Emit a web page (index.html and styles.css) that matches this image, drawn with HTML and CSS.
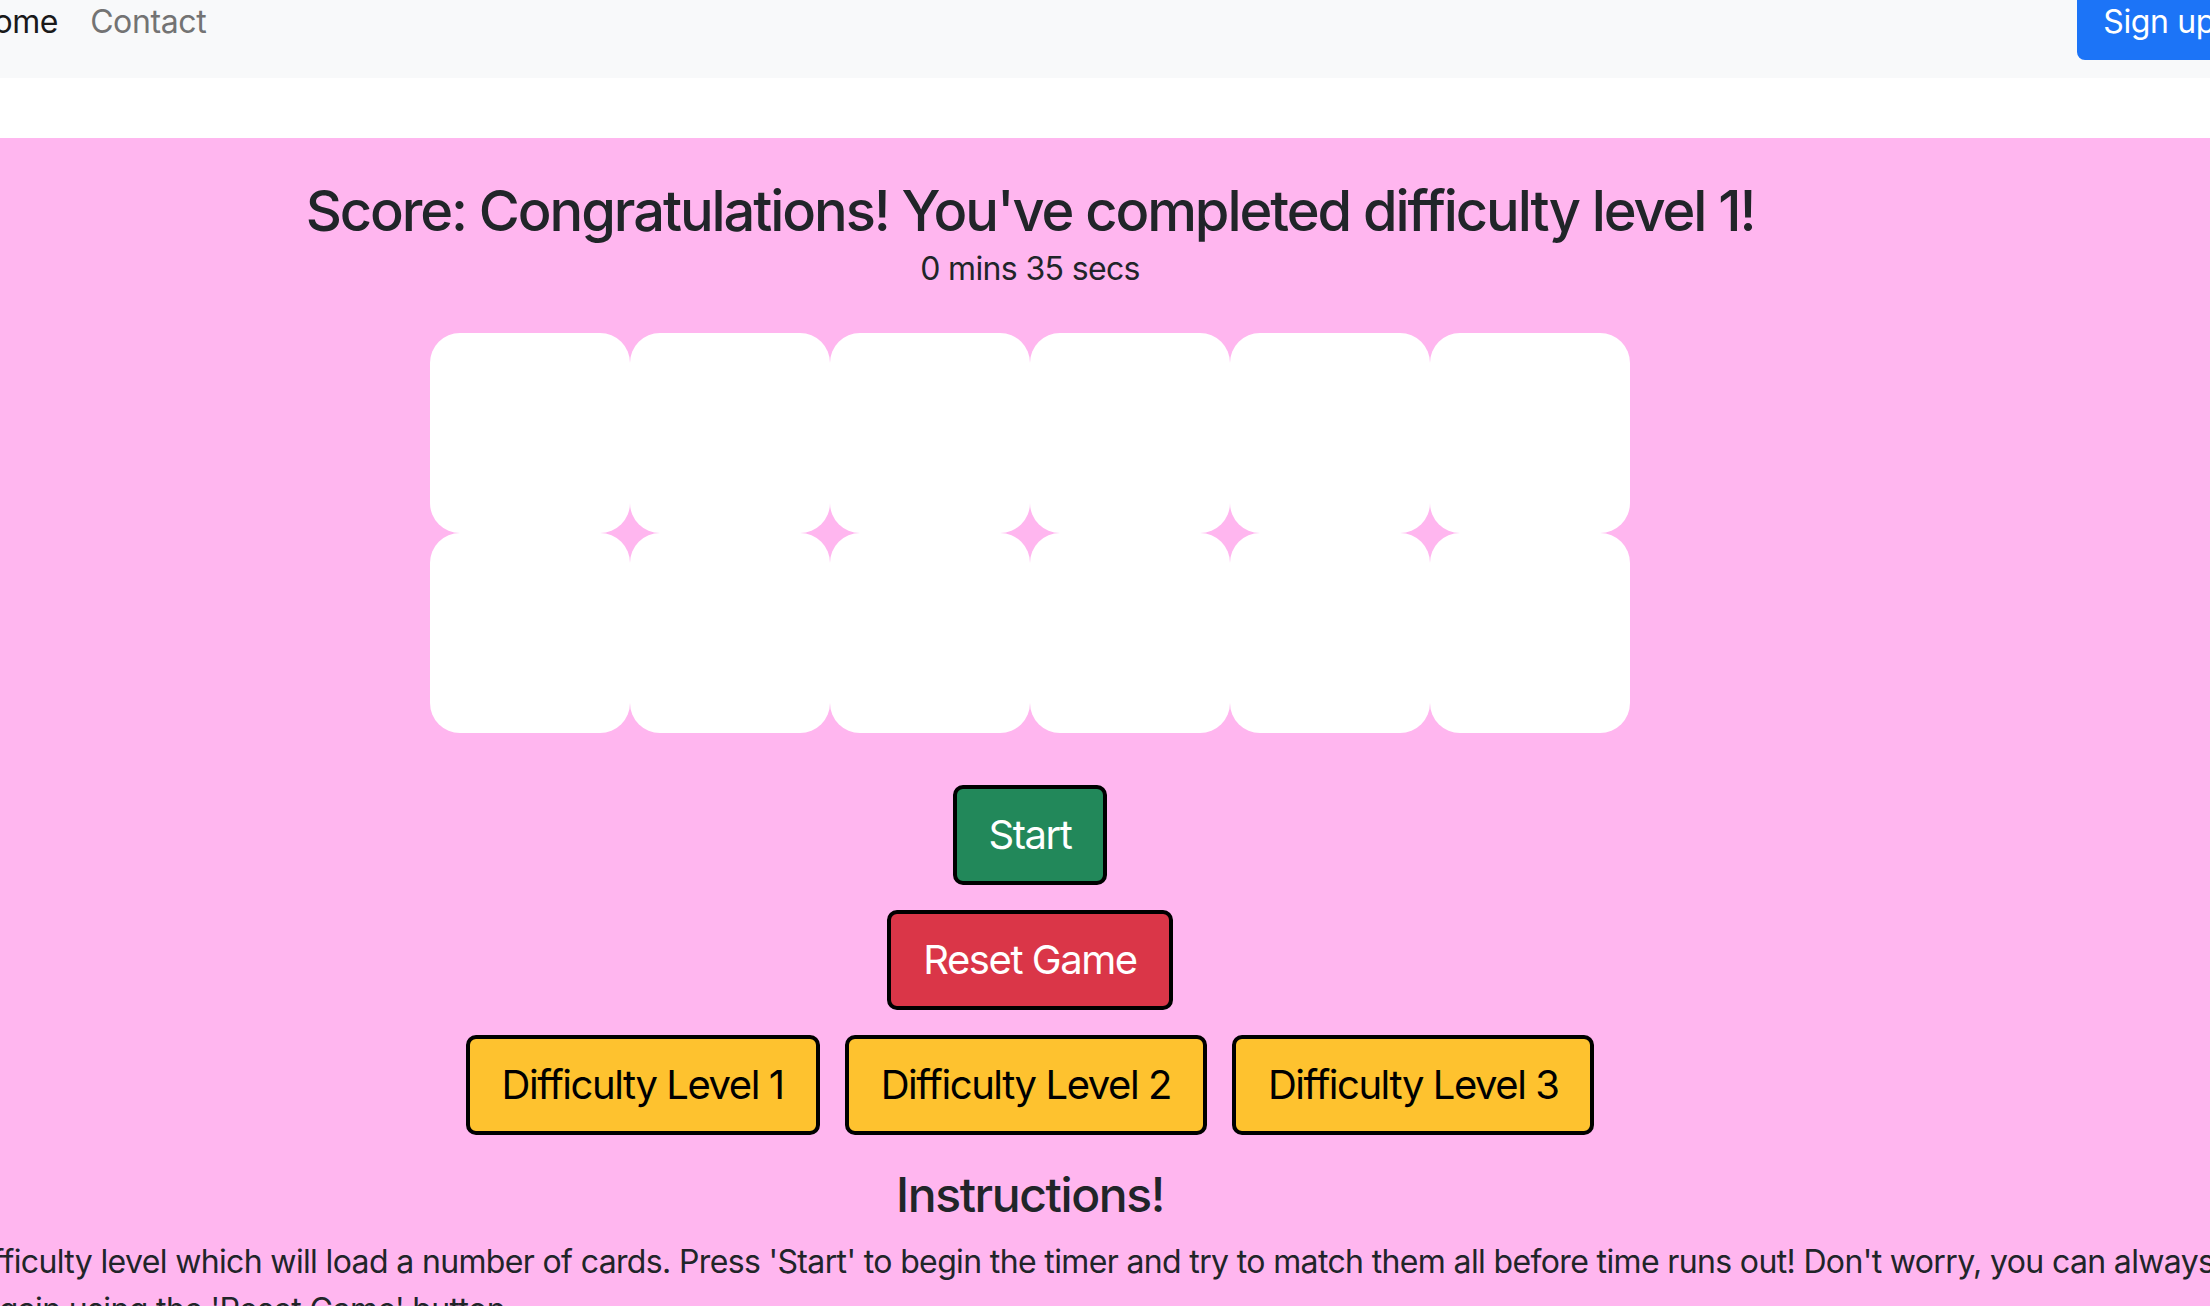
FILE: index.html
```html
<!DOCTYPE html>
<html lang="en">
<head>
<meta charset="utf-8">
<title>Memory Game</title>
<link rel="stylesheet" href="styles.css">
</head>
<body>
<nav class="navbar">
  <div class="nav-links">
    <a class="nav-link active" href="#">Home</a>
    <a class="nav-link" href="#">Contact</a>
  </div>
  <a class="btn-signup" href="#">Sign up</a>
</nav>
<main class="game">
  <div class="game-inner">
    <h3 class="score">Score: Congratulations! You've completed difficulty level 1!</h3>
    <p class="timer">0 mins 35 secs</p>
    <div class="board">
      <div class="card"></div><div class="card"></div><div class="card"></div>
      <div class="card"></div><div class="card"></div><div class="card"></div>
      <div class="card"></div><div class="card"></div><div class="card"></div>
      <div class="card"></div><div class="card"></div><div class="card"></div>
    </div>
    <div class="controls">
      <button class="btn btn-start">Start</button>
      <button class="btn btn-reset">Reset Game</button>
      <div class="levels">
        <button class="btn btn-level">Difficulty Level 1</button>
        <button class="btn btn-level">Difficulty Level 2</button>
        <button class="btn btn-level">Difficulty Level 3</button>
      </div>
    </div>
    <h4 class="instr-title">Instructions!</h4>
    <p class="instr-text">Choose a difficulty level which will load a number of cards. Press 'Start' to begin the timer and try to match them all before time runs out! Don't worry, you can always<br>try again using the 'Reset Game' button.</p>
  </div>
</main>
</body>
</html>
```
FILE: styles.css
```css
html, body {
  margin: 0;
  height: 100%;
  overflow: hidden;
}
body {
  font-family: Inter, "Noto Sans", "Liberation Sans", sans-serif;
  color: #212529;
  background: #fff;
}
.navbar {
  display: flex;
  justify-content: space-between;
  align-items: flex-start;
  height: 78px;
  background: #f8f9fa;
  margin-bottom: 60px;
}
.nav-links {
  display: flex;
  margin-left: -46px;
  margin-top: -2px;
}
.nav-link {
  font-size: 32px;
  line-height: 48px;
  letter-spacing: -0.012em;
  padding: 0 16px;
  text-decoration: none;
  color: #737373;
}
.nav-link.active {
  color: #1a1a1a;
}
.btn-signup {
  align-self: flex-end;
  margin-bottom: 18px;
  margin-right: -31px;
  font-size: 32px;
  line-height: 48px;
  letter-spacing: -0.012em;
  padding: 12px 24px;
  border: 2px solid #1c74f7;
  border-radius: 8px;
  background: #1c74f7;
  color: #fff;
  text-decoration: none;
}
.game {
  background: #ffb6ef;
  padding-top: 40px;
  min-height: 1300px;
}
.game-inner {
  width: 2060px;
  display: flex;
  flex-direction: column;
  align-items: center;
}
.score {
  margin: 0;
  font-size: 56px;
  font-weight: 500;
  line-height: 1.2;
  letter-spacing: -0.037em;
}
.timer {
  margin: 0 0 40px;
  font-size: 32px;
  line-height: 1.5;
  letter-spacing: -0.02em;
}
.board {
  display: grid;
  grid-template-columns: repeat(6, 200px);
  grid-auto-rows: 200px;
}
.card {
  background: #fff;
  border-radius: 30px;
}
.controls {
  margin-top: 52px;
  display: flex;
  flex-direction: column;
  align-items: center;
  gap: 25px;
}
.btn {
  font-family: inherit;
  font-size: 40px;
  line-height: 1.5;
  letter-spacing: -0.036em;
  padding: 16px 32px;
  border: 4px solid #000;
  border-radius: 10px;
  color: #fff;
  cursor: pointer;
}
.btn-start {
  background: #22885a;
}
.btn-reset {
  background: #da3648;
}
.levels {
  display: flex;
  gap: 25px;
}
.btn-level {
  background: #fec22f;
  color: #000;
}
.instr-title {
  margin: 31px 0 0;
  font-size: 48px;
  font-weight: 500;
  line-height: 1.2;
  letter-spacing: -0.029em;
}
.instr-text {
  align-self: flex-start;
  margin: 14px 0 0 -66px;
  width: 2600px;
  text-indent: -114px;
  font-size: 32px;
  line-height: 1.5;
  letter-spacing: -0.02em;
}
```
